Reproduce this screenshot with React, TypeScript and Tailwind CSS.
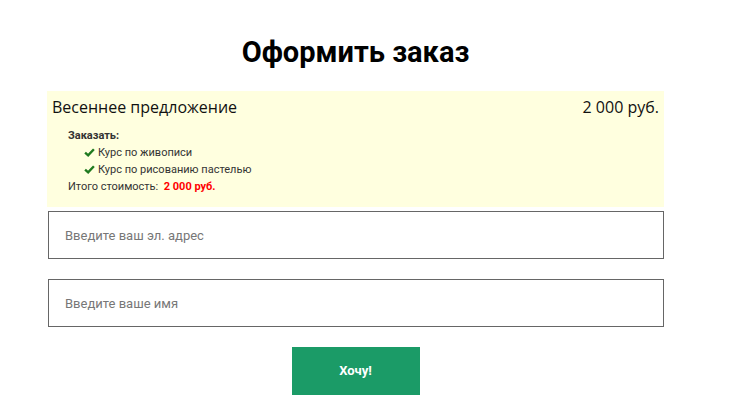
export default function App() {
  return (
    <main className="min-h-screen bg-white font-['Roboto',sans-serif]">
      <div className="ml-[47px] w-[617px] pt-[34px]">
        <h1 className="text-center text-[29px] font-bold leading-[36px] text-black">Оформить заказ</h1>

        {/* Order summary */}
        <div className="mt-[21px] bg-[#ffffdf] px-[5px] pb-[12px] pt-[5px]">
          <div className="flex items-center justify-between font-['Open_Sans',sans-serif] text-[16px] leading-[22px] text-[#111]">
            <span>Весеннее предложение</span>
            <span>2 000 руб.</span>
          </div>
          <div className="ml-[16px] mt-[9px] text-[11px] leading-[17px] text-[#333]">
            <p className="font-bold">Заказать:</p>
            <ul className="ml-[16px]">
              {['Курс по живописи', 'Курс по рисованию пастелью'].map((item) => (
                <li key={item} className="flex items-center gap-[3px]">
                  <svg viewBox="0 0 12 12" className="h-[11px] w-[11px]">
                    <path d="M1.2 6.2 L4.5 9.2 L10.8 2.4" fill="none" stroke="#1f7a1f" strokeWidth="2.6" />
                  </svg>
                  {item}
                </li>
              ))}
            </ul>
            <p>
              Итого стоимость:&nbsp;&nbsp;<span className="font-bold text-[#ff0000]">2 000 руб.</span>
            </p>
          </div>
        </div>

        {/* Form */}
        <form className="mt-[4px] flex flex-col gap-[20px]">
          <input
            type="email"
            placeholder="Введите ваш эл. адрес"
            className="ml-px h-[48px] w-[616px] border border-[#666] px-[16px] text-[13px] text-[#333] placeholder:text-[#777] focus:outline-none"
          />
          <input
            type="text"
            placeholder="Введите ваше имя"
            className="ml-px h-[48px] w-[616px] border border-[#666] px-[16px] text-[13px] text-[#333] placeholder:text-[#777] focus:outline-none"
          />
        </form>
        <div className="mt-[20px] flex justify-center">
          <button className="h-[48px] w-[128px] bg-[#1b9b67] text-[13px] font-bold text-white">Хочу!</button>
        </div>
      </div>
    </main>
  )
}
